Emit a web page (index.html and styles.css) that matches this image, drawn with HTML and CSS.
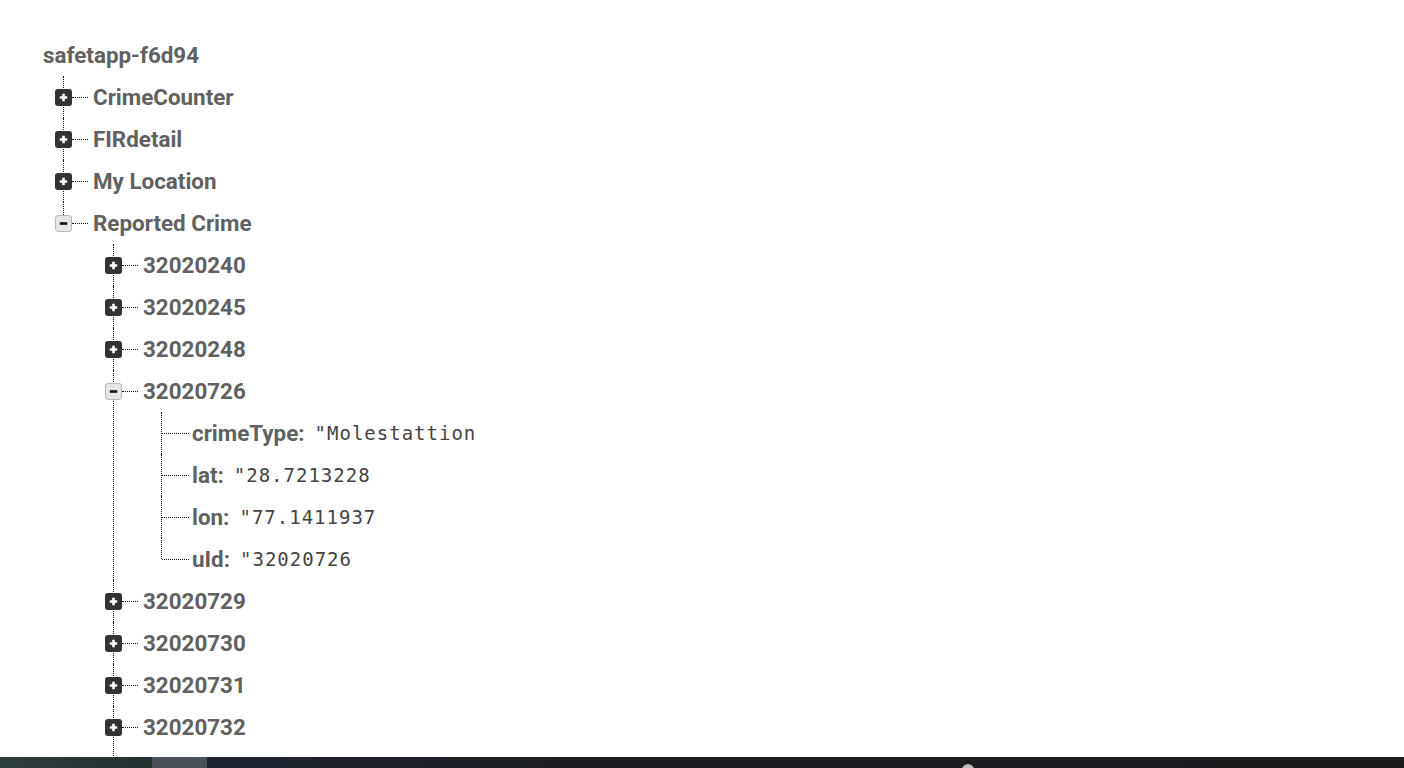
FILE: index.html
```html
<!DOCTYPE html>
<html>
<head>
<meta charset="utf-8">
<link rel="stylesheet" href="styles.css">
</head>
<body>
<div class="page">
  <main class="tree">
    <div class="root">safetapp-f6d94</div>
    <ul class="children l1">
      <li class="node"><div class="row"><svg class="toggle" viewBox="0 0 17 17"><rect x="0" y="0" width="17" height="17" rx="3" fill="#333"/><path d="M8.5 4.8v7.4M4.8 8.5h7.4" stroke="#fff" stroke-width="2.6"/></svg><span class="conn"></span><span class="key">CrimeCounter</span></div></li>
      <li class="node"><div class="row"><svg class="toggle" viewBox="0 0 17 17"><rect x="0" y="0" width="17" height="17" rx="3" fill="#333"/><path d="M8.5 4.8v7.4M4.8 8.5h7.4" stroke="#fff" stroke-width="2.6"/></svg><span class="conn"></span><span class="key">FIRdetail</span></div></li>
      <li class="node"><div class="row"><svg class="toggle" viewBox="0 0 17 17"><rect x="0" y="0" width="17" height="17" rx="3" fill="#333"/><path d="M8.5 4.8v7.4M4.8 8.5h7.4" stroke="#fff" stroke-width="2.6"/></svg><span class="conn"></span><span class="key">My Location</span></div></li>
      <li class="node last"><div class="row"><svg class="toggle" viewBox="0 0 17 17"><rect x="0.5" y="0.5" width="16" height="16" rx="2.5" fill="#e6e6e6" stroke="#b8b8b8"/><path d="M4.8 8.5h7.4" stroke="#111" stroke-width="2.6"/></svg><span class="conn"></span><span class="key">Reported Crime</span></div>
        <ul class="children l2">
          <li class="node"><div class="row"><svg class="toggle" viewBox="0 0 17 17"><rect x="0" y="0" width="17" height="17" rx="3" fill="#333"/><path d="M8.5 4.8v7.4M4.8 8.5h7.4" stroke="#fff" stroke-width="2.6"/></svg><span class="conn"></span><span class="key">32020240</span></div></li>
          <li class="node"><div class="row"><svg class="toggle" viewBox="0 0 17 17"><rect x="0" y="0" width="17" height="17" rx="3" fill="#333"/><path d="M8.5 4.8v7.4M4.8 8.5h7.4" stroke="#fff" stroke-width="2.6"/></svg><span class="conn"></span><span class="key">32020245</span></div></li>
          <li class="node"><div class="row"><svg class="toggle" viewBox="0 0 17 17"><rect x="0" y="0" width="17" height="17" rx="3" fill="#333"/><path d="M8.5 4.8v7.4M4.8 8.5h7.4" stroke="#fff" stroke-width="2.6"/></svg><span class="conn"></span><span class="key">32020248</span></div></li>
          <li class="node"><div class="row"><svg class="toggle" viewBox="0 0 17 17"><rect x="0.5" y="0.5" width="16" height="16" rx="2.5" fill="#e6e6e6" stroke="#b8b8b8"/><path d="M4.8 8.5h7.4" stroke="#111" stroke-width="2.6"/></svg><span class="conn"></span><span class="key">32020726</span></div>
            <ul class="children leaves">
              <li class="node leaf"><div class="row"><span class="conn long"></span><span class="key">crimeType:</span><span class="val">"Molestattion</span></div></li>
              <li class="node leaf"><div class="row"><span class="conn long"></span><span class="key">lat:</span><span class="val">"28.7213228</span></div></li>
              <li class="node leaf"><div class="row"><span class="conn long"></span><span class="key">lon:</span><span class="val">"77.1411937</span></div></li>
              <li class="node leaf last"><div class="row"><span class="conn long"></span><span class="key">uId:</span><span class="val">"32020726</span></div></li>
            </ul>
          </li>
          <li class="node"><div class="row"><svg class="toggle" viewBox="0 0 17 17"><rect x="0" y="0" width="17" height="17" rx="3" fill="#333"/><path d="M8.5 4.8v7.4M4.8 8.5h7.4" stroke="#fff" stroke-width="2.6"/></svg><span class="conn"></span><span class="key">32020729</span></div></li>
          <li class="node"><div class="row"><svg class="toggle" viewBox="0 0 17 17"><rect x="0" y="0" width="17" height="17" rx="3" fill="#333"/><path d="M8.5 4.8v7.4M4.8 8.5h7.4" stroke="#fff" stroke-width="2.6"/></svg><span class="conn"></span><span class="key">32020730</span></div></li>
          <li class="node"><div class="row"><svg class="toggle" viewBox="0 0 17 17"><rect x="0" y="0" width="17" height="17" rx="3" fill="#333"/><path d="M8.5 4.8v7.4M4.8 8.5h7.4" stroke="#fff" stroke-width="2.6"/></svg><span class="conn"></span><span class="key">32020731</span></div></li>
          <li class="node more"><div class="row"><svg class="toggle" viewBox="0 0 17 17"><rect x="0" y="0" width="17" height="17" rx="3" fill="#333"/><path d="M8.5 4.8v7.4M4.8 8.5h7.4" stroke="#fff" stroke-width="2.6"/></svg><span class="conn"></span><span class="key">32020732</span></div></li>
        </ul>
      </li>
    </ul>
  </main>
  <footer class="taskbar">
    <div class="seg seg-start"></div>
    <div class="seg seg-active"></div>
    <div class="seg seg-rest"></div>
    <span class="tray-dot"></span>
  </footer>
</div>
</body>
</html>
```

FILE: styles.css
```css
html, body {
  margin: 0;
  padding: 0;
  background: #fff;
}

.page {
  height: 100vh;
  display: flex;
  flex-direction: column;
  overflow: hidden;
}

.tree {
  flex: 1;
  overflow: hidden;
  padding-top: 34px;
  font-family: Roboto, "Liberation Sans", sans-serif;
  font-size: 22.4px;
  font-weight: 700;
  color: #616161;
}

.root {
  padding-left: 43px;
  line-height: 42px;
  height: 42px;
}

.children {
  list-style: none;
  margin: 0;
  padding: 0;
}

.l1 {
  margin-left: 55px;
}

.l2 {
  margin-left: 50px;
}

.leaves {
  margin-left: 56px;
}

.node {
  position: relative;
}

.node::before {
  content: "";
  position: absolute;
  left: 8px;
  top: 0;
  bottom: 0;
  border-left: 1px dotted #111;
}

.node.last::before {
  bottom: auto;
  height: 21px;
}

.node.more {
  padding-bottom: 24px;
}

.leaf::before {
  left: 0;
}

.row {
  display: flex;
  align-items: center;
  height: 42px;
  line-height: 42px;
  white-space: nowrap;
}

.toggle {
  position: relative;
  z-index: 1;
  width: 17px;
  height: 17px;
  flex: none;
  display: block;
}

.conn {
  display: block;
  width: 16px;
  height: 0;
  border-top: 1px dotted #111;
  margin-right: 5px;
  flex: none;
}

.conn.long {
  width: 27px;
  margin-left: 1px;
  margin-right: 3px;
}

.key {
  color: #616161;
}

.val {
  margin-left: 10px;
  font-family: "DejaVu Sans Mono", "Liberation Mono", monospace;
  font-weight: 400;
  font-size: 19px;
  letter-spacing: 1px;
  color: #444;
}

.taskbar {
  position: relative;
  height: 11px;
  flex: none;
  display: flex;
  background: #1c1d1f;
}

.seg-start {
  width: 152px;
  background: linear-gradient(90deg, #2d3f3c, #233030);
}

.seg-active {
  width: 55px;
  background: #4a5057;
}

.seg-rest {
  flex: 1;
  background: linear-gradient(90deg, #1f2630 0%, #1c1e22 30%, #1b1c1e 100%);
}

.tray-dot {
  position: absolute;
  left: 962px;
  top: 7px;
  width: 12px;
  height: 12px;
  border-radius: 50%;
  background: #bdbdbd;
}
```
